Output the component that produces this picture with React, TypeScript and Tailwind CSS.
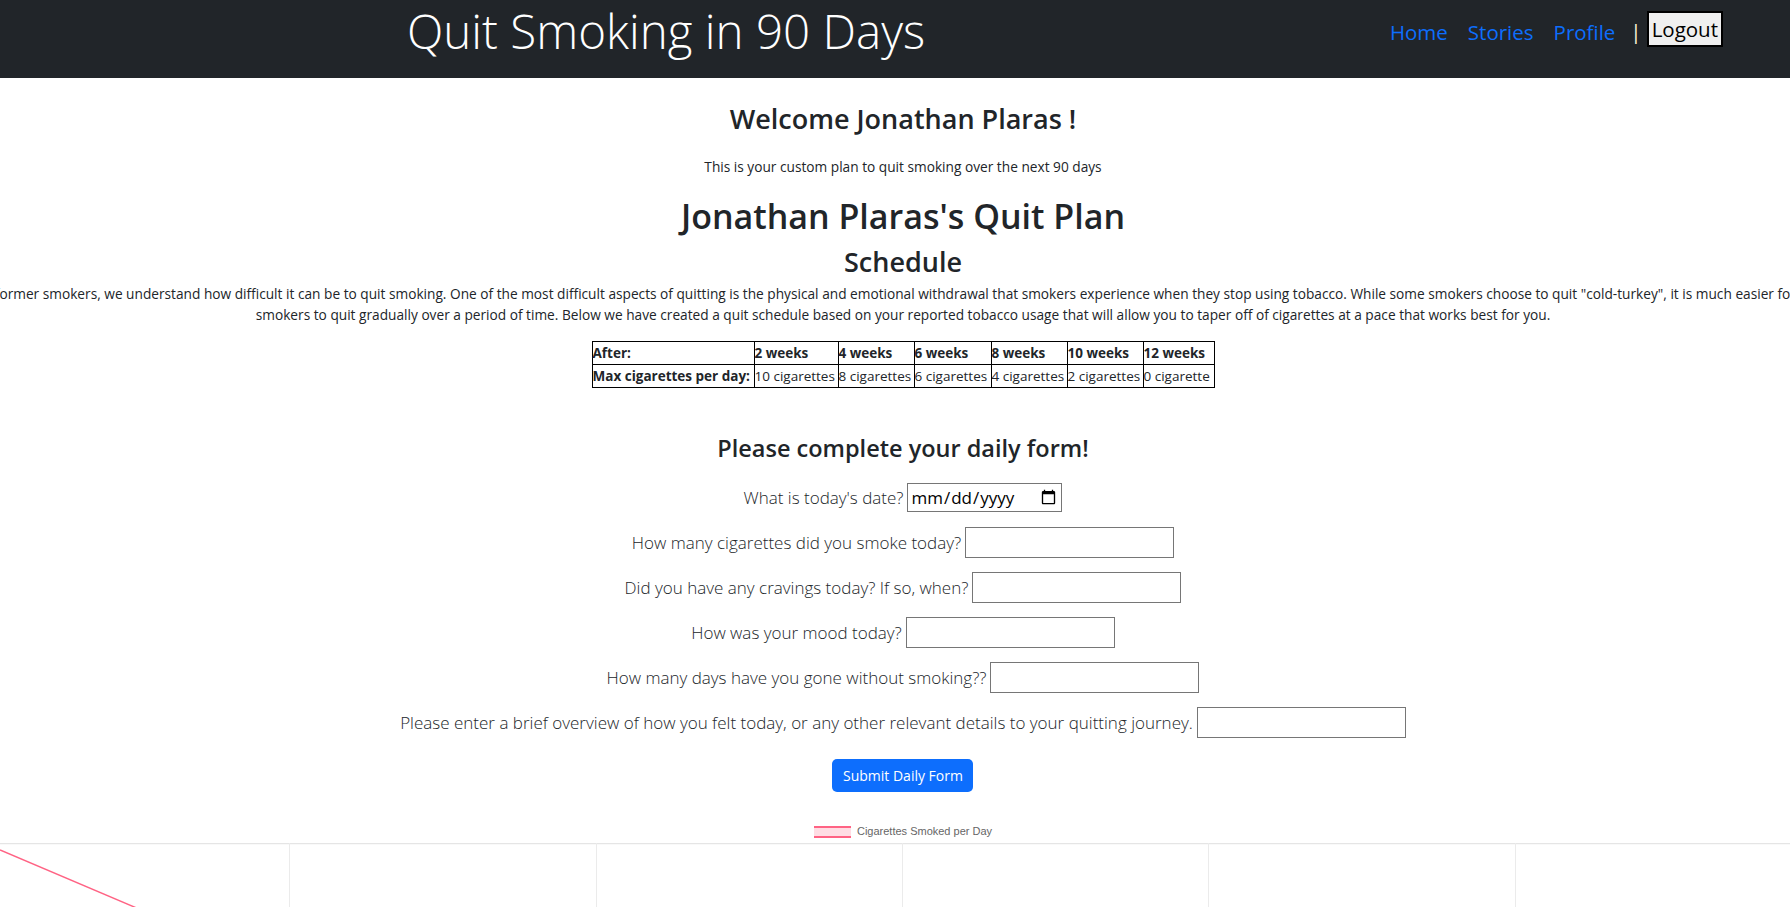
import React from 'react'

const schedule = [
  { after: '2 weeks', max: '10 cigarettes', w: 'w-[84px]' },
  { after: '4 weeks', max: '8 cigarettes', w: 'w-[76px]' },
  { after: '6 weeks', max: '6 cigarettes', w: 'w-[77px]' },
  { after: '8 weeks', max: '4 cigarettes', w: 'w-[76px]' },
  { after: '10 weeks', max: '2 cigarettes', w: 'w-[76px]' },
  { after: '12 weeks', max: '0 cigarette', w: 'w-[71px]' },
]

const questions = [
  'How many cigarettes did you smoke today?',
  'Did you have any cravings today? If so, when?',
  'How was your mood today?',
  'How many days have you gone without smoking??',
  'Please enter a brief overview of how you felt today, or any other relevant details to your quitting journey.',
]

export default function App() {
  return (
    <div className="min-h-screen overflow-hidden bg-white font-['Open_Sans',sans-serif] text-[#212529]">
      <nav className="flex h-[78px] items-start bg-[#212529]">
        <h1 className="ml-[407px] mt-[2px] text-[47.5px] font-light leading-[1.2] text-white">
          Quit Smoking in 90 Days
        </h1>
        <div className="ml-auto mr-[67px] mt-[11px] flex h-[36px] items-center text-[20.5px]">
          <a href="#" className="mt-[7px] text-[#0d6efd]">Home</a>
          <a href="#" className="ml-[20px] mt-[7px] text-[#0d6efd]">Stories</a>
          <a href="#" className="ml-[20px] mt-[7px] text-[#0d6efd]">Profile</a>
          <span className="ml-[15px] mt-[5px] text-[#fdf6d8]">|</span>
          <button className="ml-[5px] h-[36px] border-2 border-black bg-[#efefef] px-[3px] leading-none text-black">
            Logout
          </button>
        </div>
      </nav>

      <main className="flex flex-col items-center pl-4">
        <h3 className="mt-[25px] text-[27px] font-semibold leading-[1.2]">Welcome Jonathan Plaras !</h3>
        <p className="mt-[21px] text-[13.7px] leading-[21px]">
          This is your custom plan to quit smoking over the next 90 days
        </p>
        <h1 className="mt-[15px] text-[34px] font-semibold leading-[48px]">Jonathan Plaras's Quit Plan</h1>
        <h2 className="mt-[3px] text-[27px] font-semibold leading-[38px]">Schedule</h2>

        {/* paragraph is wider than the window, so it spills over both edges */}
        <div className="mt-[2px] flex w-full flex-col items-center text-[13.7px] leading-[21px]">
          <span className="whitespace-nowrap pr-[34px]">
            As former smokers, we understand how difficult it can be to quit smoking. One of the most difficult aspects of quitting is the physical and emotional withdrawal that smokers experience when they stop using tobacco. While some smokers choose to quit "cold-turkey", it is much easier for
          </span>
          <span className="whitespace-nowrap">
            smokers to quit gradually over a period of time. Below we have created a quit schedule based on your reported tobacco usage that will allow you to taper off of cigarettes at a pace that works best for you.
          </span>
        </div>

        <table className="mt-[16px] w-[623px] table-fixed border-collapse border border-black text-[13.5px] leading-[21px]">
          <tbody>
            <tr className="h-[23px]">
              <th className="w-[162px] border border-black p-0 text-left font-bold">After:</th>
              {schedule.map((s) => (
                <th key={s.after} className={`${s.w} border border-black p-0 text-left font-bold`}>
                  {s.after}
                </th>
              ))}
            </tr>
            <tr className="h-[23px]">
              <th className="whitespace-nowrap border border-black p-0 text-left font-bold">Max cigarettes per day:</th>
              {schedule.map((s) => (
                <td key={s.max} className="overflow-hidden whitespace-nowrap border border-black p-0">
                  {s.max}
                </td>
              ))}
            </tr>
          </tbody>
        </table>

        <h3 className="mt-[45px] text-[23.5px] font-semibold leading-[31px]">Please complete your daily form!</h3>

        <form className="mt-[18px] flex flex-col items-center gap-[14px]">
          <div className="flex h-[31px] items-center gap-[4px]">
            <label className="text-[17px] font-light">What is today's date?</label>
            <input
              type="date"
              className="h-[29px] w-[155px] border border-[#767676] px-[2px] text-[17px] text-black"
            />
          </div>
          {questions.map((q) => (
            <div key={q} className="flex h-[31px] items-center gap-[4px]">
              <label className="text-[17px] font-light">{q}</label>
              <input type="text" className="h-[31px] w-[209px] border border-[#767676]" />
            </div>
          ))}
          <button
            type="button"
            className="mt-[7px] h-[33px] w-[141px] rounded-[5px] bg-[#0d6efd] text-[14px] text-white"
          >
            Submit Daily Form
          </button>
        </form>

        <div className="mt-[31px] flex items-center gap-[6px] font-['Liberation_Sans',sans-serif] text-[11px] text-[#666]">
          <span className="h-[12px] w-[37px] border-y-[2px] border-[#ff6384] bg-[#ffdde4]" />
          <span>Cigarettes Smoked per Day</span>
        </div>
      </main>

      <svg className="mt-[3px] block" width="1790" height="200" viewBox="0 0 1790 200">
        <line x1="0" y1="0.5" x2="1790" y2="0.5" stroke="#e5e5e5" strokeWidth="1.5" />
        {[289, 596, 902, 1208, 1515].map((x) => (
          <line key={x} x1={x + 0.5} y1="0" x2={x + 0.5} y2="200" stroke="#ebebeb" />
        ))}
        <line x1="0" y1="7" x2="400" y2="177" stroke="#ff6384" strokeWidth="1.5" />
      </svg>
    </div>
  )
}
